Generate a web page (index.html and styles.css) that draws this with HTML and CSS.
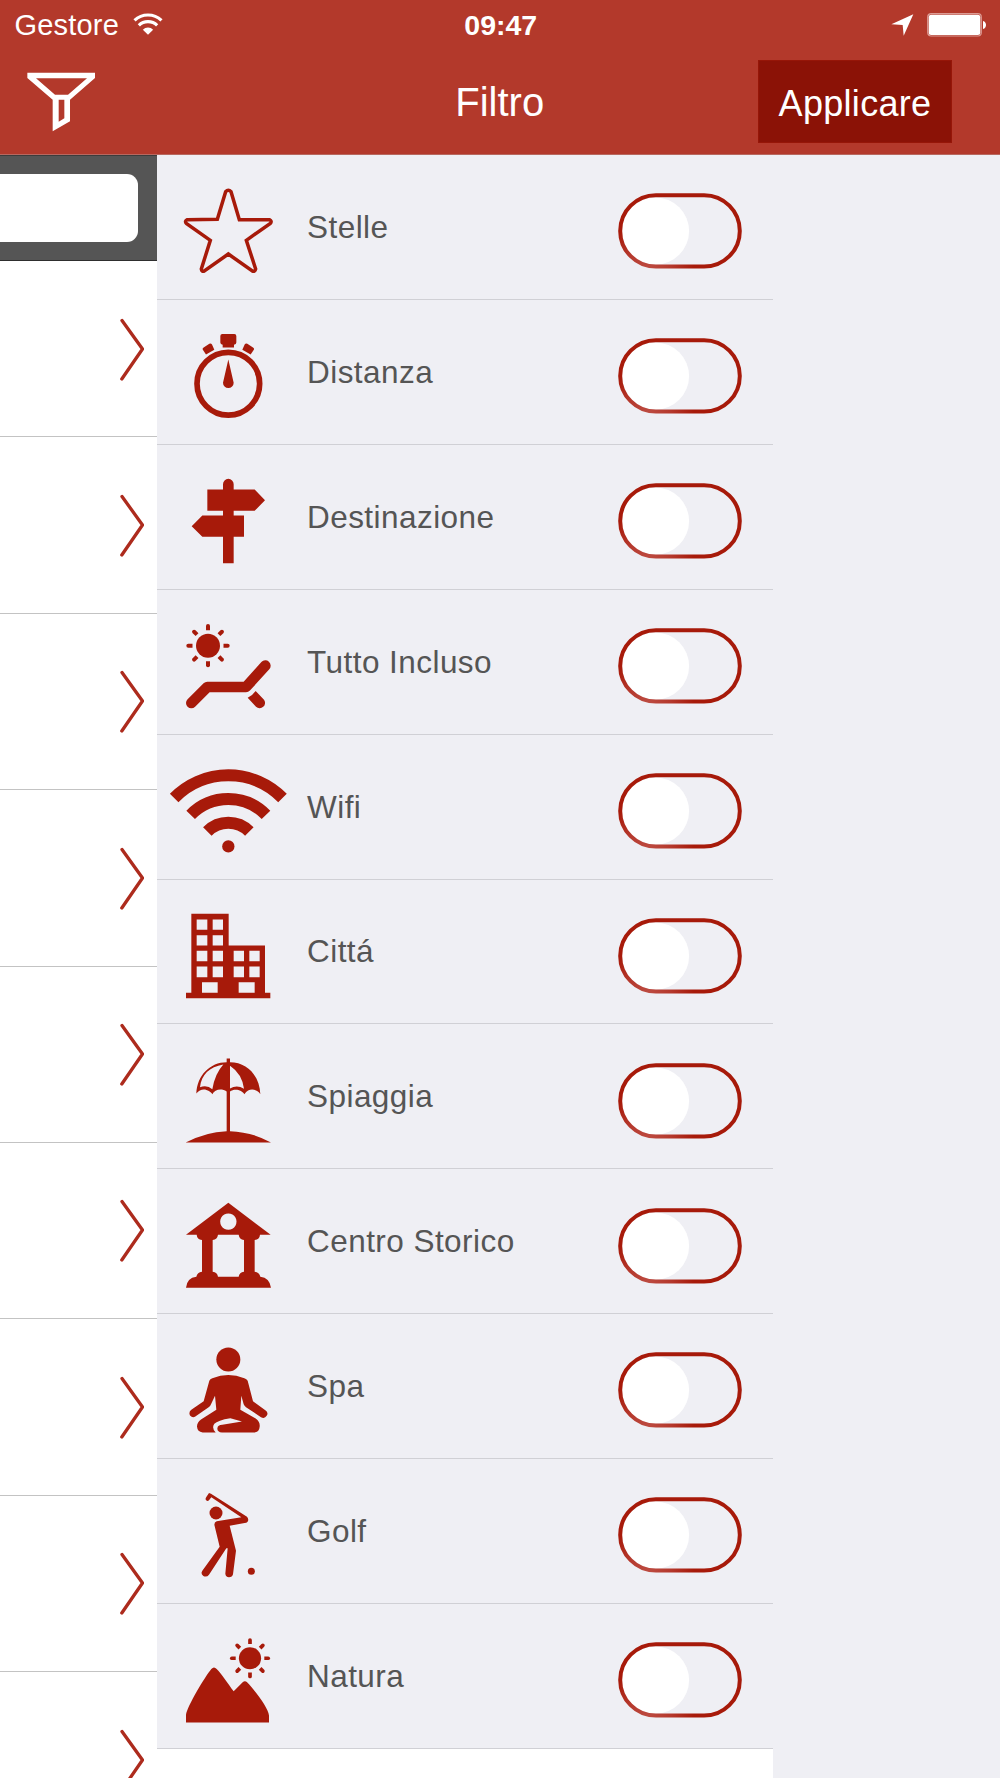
FILE: index.html
```html
<!DOCTYPE html>
<html lang="it">
<head>
<meta charset="utf-8">
<title>Filtro</title>
<link rel="stylesheet" href="styles.css">
</head>
<body>
<svg class="defs" aria-hidden="true">
  <defs>
    <radialGradient id="fade" gradientUnits="userSpaceOnUse" cx="30" cy="76" r="46">
      <stop offset="0" stop-color="#bd4c42"/><stop offset=".5" stop-color="#b5382c"/><stop offset="1" stop-color="#a71a0a"/>
    </radialGradient>
    <symbol id="toggle" viewBox="0 0 124 76">
      <circle cx="37.500" cy="38" r="33.600" fill="#fff"/>
      <rect x="2.200" y="2.200" width="119.600" height="71.400" rx="35.700" fill="none" stroke="url(#fade)" stroke-width="4"/>
    </symbol>
    <symbol id="chevron" viewBox="0 0 24 64">
      <path d="M2 2.500 22.500 31 1.800 61" fill="none" stroke="#ad2b1d" stroke-width="3.300" stroke-linecap="round"/>
    </symbol>
    <path id="ray" d="M-6-46.500V-59a6 6 0 0 1 12 0v12.500z"/>
    <g id="sun">
      <circle r="36"/>
      <use href="#ray"/><use href="#ray" transform="rotate(45)"/><use href="#ray" transform="rotate(90)"/><use href="#ray" transform="rotate(135)"/>
      <use href="#ray" transform="rotate(180)"/><use href="#ray" transform="rotate(225)"/><use href="#ray" transform="rotate(270)"/><use href="#ray" transform="rotate(315)"/>
    </g>
  </defs>
</svg>

<header class="top">
  <div class="status">
    <div class="carrier">Gestore
      <svg class="signal" viewBox="399 36 90 70"><g fill="none" stroke="#fff" stroke-width="9.500"><path d="M403.500 61a59 59 0 0 1 81 0"/><path d="M416.500 76a39.500 39.500 0 0 1 55 0"/></g><path d="M444 104 428.500 89a21.500 21.500 0 0 1 31 0z" fill="#fff"/></svg>
    </div>
    <div class="time">09:47</div>
    <div class="power">
      <svg class="locate" viewBox="1173 42 68 67"><path d="M1174 73 1240 43 1211 107 1208 75z" fill="#fff"/></svg>
      <svg class="battery" viewBox="0 0 60 24"><rect x=".7" y=".7" width="53.600" height="22.300" rx="3.500" fill="none" stroke="#dc9b94" stroke-width="1.200"/><rect x="1.700" y="1.700" width="51.600" height="20.200" rx="2.500" fill="#fff"/><path d="M56 8c4 .8 4 7.200 0 8z" fill="#fff"/></svg>
    </div>
  </div>
  <nav class="bar">
    <svg class="funnel" viewBox="78 214 206 180"><path fill="#fff" fill-rule="evenodd" d="M79 216H282V232L207 297V362L155 392V297L79 232zM105 233 162 282H201L258 233zM173 297V363L190 353V297z"/></svg>
    <h1 class="title">Filtro</h1>
    <button class="apply">Applicare</button>
  </nav>
</header>

<main class="content">
  <aside class="results">
    <div class="search"><div class="field"></div></div>
    <div class="result"><svg><use href="#chevron"/></svg></div>
    <div class="result"><svg><use href="#chevron"/></svg></div>
    <div class="result"><svg><use href="#chevron"/></svg></div>
    <div class="result"><svg><use href="#chevron"/></svg></div>
    <div class="result"><svg><use href="#chevron"/></svg></div>
    <div class="result"><svg><use href="#chevron"/></svg></div>
    <div class="result"><svg><use href="#chevron"/></svg></div>
    <div class="result"><svg><use href="#chevron"/></svg></div>
    <div class="result"><svg><use href="#chevron"/></svg></div>
  </aside>

  <section class="panel">
    <ul class="filters">
      <li class="filter">
        <svg class="icon" viewBox="471 45 426 434.700"><path fill="none" stroke="currentColor" stroke-width="10.500" d="M677 155Q685 146 693 155L718 239H808Q817 243 811 250L739 301L767 387Q765 396 757 393L685 342L613 393Q605 396 604 387L631 301L559 250Q553 243 562 239L652 238z"/></svg>
        <span class="label">Stelle</span><svg class="toggle"><use href="#toggle"/></svg>
      </li>
      <li class="filter">
        <svg class="icon" viewBox="471 479.700 426 434.700"><circle cx="685" cy="731" r="94" fill="none" stroke="currentColor" stroke-width="17"/><path d="M685 658 701 728A16 16 0 1 1 669 728zM667 582H703Q709 582 709 588V607Q709 613 702 614V622H668V614Q661 613 661 607V588Q661 582 667 582z"/><path id="lug" d="M611 622 628 611Q633 609 636 613L643 629 618 643 608 628Q607 624 611 622z"/><use href="#lug" transform="matrix(-1 0 0 1 1370 0)"/></svg>
        <span class="label">Distanza</span><svg class="toggle"><use href="#toggle"/></svg>
      </li>
      <li class="filter">
        <svg class="icon" viewBox="-9 14.400 426 434.700"><path d="M189 148V132a16 16 0 0 1 32 0V148H284L315 180 284 212H221V226H252V290H221V369H189V290H127L95 258 127 226H189V212H142V148z"/></svg>
        <span class="label">Destinazione</span><svg class="toggle"><use href="#toggle"/></svg>
      </li>
      <li class="filter">
        <svg class="icon" viewBox="-9 449 426 434.700"><use href="#sun" x="144" y="616"/><path fill="none" stroke="currentColor" stroke-width="32" stroke-linecap="round" stroke-linejoin="round" d="M94 788 142 740H258L316 676"/><path d="M263 772Q278 765 287 752L312 778A16 16 0 0 1 288 799z"/></svg>
        <span class="label">Tutto Incluso</span><svg class="toggle"><use href="#toggle"/></svg>
      </li>
      <li class="filter">
        <svg class="icon" viewBox="-9 -16.200 426 434.700"><g fill="none" stroke="currentColor" stroke-width="36"><path d="M42.500 173a228 228 0 0 1 325 0"/><path d="M92 223.500a158 158 0 0 1 226 0"/><path d="M142 273.500a89 89 0 0 1 126 0"/></g><circle cx="205" cy="318" r="18.500"/></svg>
        <span class="label">Wifi</span><svg class="toggle"><use href="#toggle"/></svg>
      </li>
      <li class="filter">
        <svg class="icon" viewBox="-9 418.500 426 434.700"><path fill-rule="evenodd" d="M94 520H206V615H315V757H331V773H78V757H94zM110 537V568H142V537zM158 537V568H189V537zM110 584V615H142V584zM158 584V615H189V584zM110 631V662H142V631zM158 631V662H189V631zM110 678V710H142V678zM158 678V710H189V678zM221 631V662H252V631zM268 631V662H299V631zM221 678V710H252V678zM268 678V710H299V678zM126 725V757H173V725zM236 725V757H284V725z"/></svg>
        <span class="label">Cittá</span><svg class="toggle"><use href="#toggle"/></svg>
      </li>
      <li class="filter">
        <svg class="icon" viewBox="-9 -17.500 426 434.700"><path fill-rule="evenodd" d="M200 97V86H210V97C262 97 299 138 301 193C295 182 270 168 253 193C247 181 224 174 210 185V304Q275 306 333 338H77Q138 306 200 304V185C184 174 164 179 157 193C150 181 125 169 109 191C111 137 150 97 200 97zM190 104C148 111 124 135 120 172Q142 165 157 178Q165 131 190 104zM210 108V176Q231 164 252 177Q246 132 210 108z"/></svg>
        <span class="label">Spiaggia</span><svg class="toggle"><use href="#toggle"/></svg>
      </li>
      <li class="filter">
        <svg class="icon" viewBox="-9 416.700 426 434.700"><path fill-rule="evenodd" d="M205 518 332 614H300Q299 628 284 630V725Q298 727 301 740Q329 743 333 773H78Q81 743 109 740Q112 727 126 725V630Q111 628 110 614H78zM205 550a24.500 24.500 0 1 0 .1 0zM174 614Q172 628 158 630V725Q172 727 174 740H236Q238 727 252 725V630Q238 628 236 614z"/></svg>
        <span class="label">Centro Storico</span><svg class="toggle"><use href="#toggle"/></svg>
      </li>
      <li class="filter">
        <svg class="icon" viewBox="-9 -18.600 426 434.700"><circle cx="205" cy="118" r="36"/><path d="M148 182Q150 176 157 174Q205 155 253 174Q260 176 263 182L279 243 316 270A12 12 0 0 1 303 291L258 261Q253 257 251 252L244 227 241 269 287 295Q301 305 299 320Q298 337 281 337H186Q172 336 172 325Q173 314 187 314L246 304 211 294Q173 300 163 311Q154 323 167 337H128Q112 335 111 319Q111 307 123 298L169 269 165 227 153 252Q151 258 146 261L106 289Q98 295 90 286Q85 276 94 269L131 243z"/></svg>
        <span class="label">Spa</span><svg class="toggle"><use href="#toggle"/></svg>
      </li>
      <li class="filter">
        <svg class="icon" viewBox="-9 417 426 434.700"><circle cx="168" cy="579" r="19.500"/><circle cx="274" cy="754" r="10.500"/><path d="M147 519 153 521 261 590Q268 599 262 606Q260 609 254 609L209 617 228 692 219 763Q217 772 207 772Q197 771 196 761L203 685H199L147 764Q140 773 130 768Q121 761 127 752L179 680 163 614Q163 606 170 604L244 592 154 532 147 541Q142 545 138 540Q135 537 139 531z"/></svg>
        <span class="label">Golf</span><svg class="toggle"><use href="#toggle"/></svg>
      </li>
      <li class="filter">
        <svg class="icon" viewBox="471 12.300 426 434.700"><use href="#sun" transform="translate(750 175) scale(.925)"/><path d="M558 368V345C562 318 615 230 634 207Q642 198 650 207C665 222 684 251 701 274L728 247Q735 240 742 248C764 271 806 325 807 347V368z"/></svg>
        <span class="label">Natura</span><svg class="toggle"><use href="#toggle"/></svg>
      </li>
    </ul>
  </section>
</main>
</body>
</html>
```

FILE: styles.css
```css
* { box-sizing: border-box; }

body {
  margin: 0;
  height: 1778px;
  display: flex;
  flex-direction: column;
  overflow: hidden;
  background: #efeff4;
  color: #555;
  font-family: "Liberation Sans", Arial, sans-serif;
}

svg { display: block; flex: none; }
.defs { width: 0; height: 0; position: absolute; }

.top {
  flex: none;
  height: 155px;
  background: #b3392b;
  border-bottom: 1px solid #b8685f;
  color: #fff;
}

.status {
  display: grid;
  grid-template-columns: 1fr auto 1fr;
  align-items: center;
  height: 51px;
  padding: 0 13px 0 14.500px;
}
.carrier { display: flex; align-items: center; gap: 13.500px; font-size: 29px; letter-spacing: .2px; }
.signal { width: 30px; height: 23.300px; margin-top: -4px; }
.time { font-size: 28.500px; font-weight: bold; }
.power { display: flex; justify-content: flex-end; align-items: center; gap: 13px; margin-top: -1px; }
.locate { width: 22.700px; height: 22.300px; }
.battery { width: 60px; height: 24px; }

.bar {
  display: grid;
  grid-template-columns: 1fr auto 1fr;
  align-items: start;
  height: 103px;
  padding: 9px 48px 0 26.500px;
}
.funnel { width: 68.700px; height: 60px; margin-top: 11.500px; }
.title { margin: 19px 0 0 21px; font-size: 40px; font-weight: normal; line-height: 46px; }
.apply {
  justify-self: end;
  width: 194px;
  height: 83px;
  padding: 5px 0 0;
  border: 1px solid #961608;
  background: #8b1206;
  color: inherit;
  font: 36px "Liberation Sans", Arial, sans-serif;
  letter-spacing: .3px;
}

.content { flex: 1; min-height: 0; display: flex; }

.results { width: 157px; background: #fff; overflow: hidden; }
.search {
  height: 106px;
  padding-top: 18px;
  background: #555;
  border-top: 1px solid #3c3c3c;
  border-bottom: 1px solid #2e2e2e;
}
.field { width: 138px; height: 68px; background: #fff; border-radius: 0 11px 11px 0; }
.result { height: 176.400px; padding: 56.500px 0 0 119.500px; border-bottom: 1px solid #c3c3c3; }
.result svg { width: 24px; height: 64px; }

.panel { width: 616px; background: #fff; }
.filters {
  height: 1594px;
  margin: 0;
  padding: 0;
  list-style: none;
  display: grid;
  grid-template-rows: repeat(11, 1fr);
  background: #efeff4;
}
.filter {
  display: flex;
  align-items: center;
  padding-right: 31px;
  border-bottom: 1px solid #d0d0d5;
  min-height: 0;
}
.icon { width: 142px; height: 144.900px; margin-bottom: -1px; color: #a71a0a; fill: currentColor; }
.label { flex: 1; padding: 1px 0 0 8px; font-size: 31.500px; letter-spacing: .45px; white-space: nowrap; }
.toggle { width: 124px; height: 76px; margin-top: 8.500px; }
```
